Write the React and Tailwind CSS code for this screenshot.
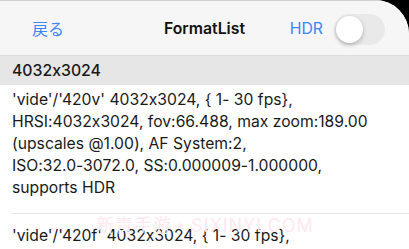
import React from "react";

export default function App() {
  const lines = [
    "'vide'/'420v' 4032x3024, { 1- 30 fps},",
    "HRSI:4032x3024, fov:66.488, max zoom:189.00",
    "(upscales @1.00), AF System:2,",
    "ISO:32.0-3072.0, SS:0.000009-1.000000,",
    "supports HDR",
  ];
  return (
    <div
      className="w-[409px] h-[249px] bg-black overflow-hidden"
      style={{ fontFamily: "Inter, 'Noto Sans CJK JP', sans-serif", fontFeatureSettings: "'calt' 0" }}
    >
      <div className="relative w-full h-full bg-white rounded-tr-[34px] overflow-hidden">
        <div className="h-[56px] pt-[2px] bg-[#f6f6f6] border-t border-[#cfcfcf] border-b border-b-[#dcdcdc] flex items-center">
          <div className="w-[150px] pl-[32px] text-[16px] text-[#3d86f5]">戻る</div>
          <div className="flex-1 text-center text-[15.8px] font-semibold text-[#111]">FormatList</div>
          <div className="w-[150px] flex items-center justify-end pr-[24px] gap-[11px]">
            <span className="text-[15.8px] text-[#3d86f5]">HDR</span>
            <div className="w-[51px] h-[31px] rounded-full bg-[#e9e9ea] p-[2px] flex items-center">
              <div className="w-[27px] h-[27px] rounded-full bg-white shadow-[0_2px_4px_rgba(0,0,0,0.25)]" />
            </div>
          </div>
        </div>
        <div className="h-[29px] bg-[#e6e6e6] pl-[12px] flex items-center text-[15.8px] font-medium text-[#1a1a1a]">4032x3024</div>
        <div className="pl-[12px] pt-[4px] text-[15.7px] leading-[22px] text-[#1a1a1a]">
          {lines.map((l) => (
            <div key={l}>{l}</div>
          ))}
        </div>
        <div className="ml-[12px] mt-[14px] border-t border-[#e4e4e4]" />
        <div className="pl-[12px] pt-[11px] text-[15.7px] leading-[22px] text-[#1a1a1a]">'vide'/'420f' 4032x3024, {"{"} 1- 30 fps{"}"},</div>
        <div className="absolute left-[96px] top-[212px] text-[18px] text-[#ffe8f1] tracking-[1px] pointer-events-none">新青手游・SIXINYI.COM</div>
      </div>
    </div>
  );
}
